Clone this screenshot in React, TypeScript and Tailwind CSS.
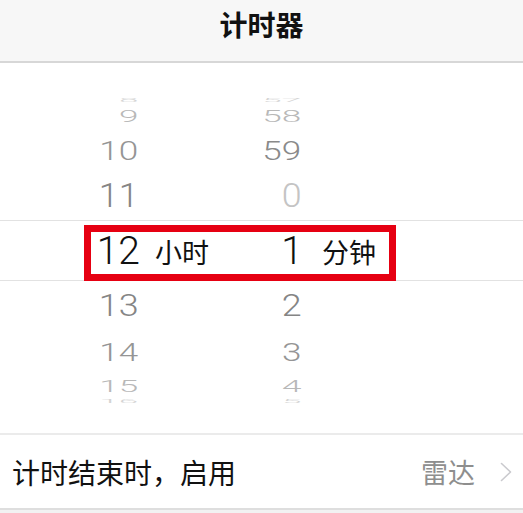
const cjk = { fontFamily: '"Noto Sans CJK SC", "Noto Sans", sans-serif' };
const num = { fontFamily: 'Roboto, "Liberation Sans", sans-serif' };

type Row = { h: string; m: string; box: string; scale: string; hc: string; mc: string };

const above: Row[] = [
  { h: "8", m: "57", box: "h-[17.5px]", scale: "scale-x-[0.9] scale-y-[0.15]", hc: "text-[#d4d4d4]", mc: "text-[#d4d4d4]" },
  { h: "9", m: "58", box: "h-[33.5px]", scale: "scale-x-[0.9] scale-y-[0.4]", hc: "text-[#b8b8b8]", mc: "text-[#b8b8b8]" },
  { h: "10", m: "59", box: "h-[45.5px]", scale: "scale-x-[0.9] scale-y-[0.65]", hc: "text-[#959595]", mc: "text-[#8a8a8a]" },
  { h: "11", m: "0", box: "h-[54.5px]", scale: "scale-x-[0.92] scale-y-[0.83]", hc: "text-[#858585]", mc: "text-[#c4c4c4]" },
];

const below: Row[] = [
  { h: "13", m: "2", box: "h-[46.5px]", scale: "scale-x-[0.92] scale-y-[0.8]", hc: "text-[#858585]", mc: "text-[#858585]" },
  { h: "14", m: "3", box: "h-[33.5px]", scale: "scale-x-[0.9] scale-y-[0.68]", hc: "text-[#959595]", mc: "text-[#959595]" },
  { h: "15", m: "4", box: "h-[15px]", scale: "scale-x-[0.9] scale-y-[0.43]", hc: "text-[#b8b8b8]", mc: "text-[#b8b8b8]" },
  { h: "16", m: "5", box: "h-0", scale: "scale-x-[0.9] scale-y-[0.15]", hc: "text-[#d4d4d4]", mc: "text-[#d4d4d4]" },
];

function WheelRow({ r }: { r: Row }) {
  return (
    <div className={r.box}>
      <div className="flex h-0 items-center text-[39px] font-light leading-none" style={num}>
        <div className="flex w-[140px] justify-end">
          <span className={`inline-block ${r.scale} ${r.hc}`}>{r.h}</span>
        </div>
        <div className="flex w-[163px] justify-end">
          <span className={`inline-block ${r.scale} ${r.mc}`}>{r.m}</span>
        </div>
      </div>
    </div>
  );
}

export default function App() {
  return (
    <div className="flex h-[513px] w-[523px] flex-col overflow-hidden bg-[#f2f2f2]">
      <div className="h-[63px] border-b-2 border-[#d7d7d7] bg-[#f7f7f7] pt-[10px] text-center">
        <h1 className="text-[28px] font-bold leading-[28px] text-[#111]" style={cjk}>计时器</h1>
      </div>

      <div className="relative h-[370px] bg-white pt-[37px]">
        <div className="absolute left-0 right-0 top-[157px] h-px bg-[#e2e2e2]" />
        <div className="absolute left-0 right-0 top-[217px] h-px bg-[#e2e2e2]" />

        {above.map((r) => <WheelRow key={r.h} r={r} />)}

        <div className="h-[55px]">
          <div className="flex h-0 items-center text-[#111]">
            <div className="flex w-[140px] justify-end text-[39px] font-light leading-none" style={num}>12</div>
            <div className="flex w-[163px] items-center">
              <span className="ml-[15px] text-[27px] leading-none" style={cjk}>小时</span>
              <span className="flex-1 text-right text-[39px] font-light leading-none" style={num}>1</span>
            </div>
            <span className="ml-[19px] text-[27px] leading-none" style={cjk}>分钟</span>
          </div>
        </div>

        {below.map((r) => <WheelRow key={r.h} r={r} />)}

        <div className="absolute left-[84px] top-[162px] h-[56px] w-[312px] border-[7px] border-[#e60012]" />
      </div>

      <div className="flex h-[77px] items-center border-y-2 border-t-[#ebebeb] border-b-[#dedede] bg-white pl-[12px] pr-[11px]">
        <span className="flex-1 text-[28px] leading-none text-[#111]" style={cjk}>计时结束时，启用</span>
        <span className="text-[27px] leading-none text-[#8e8e8e]" style={cjk}>雷达</span>
        <svg className="ml-[25px]" width="12" height="20" viewBox="0 0 12 20" fill="none">
          <polyline points="1.5,1.5 10.5,10 1.5,18.5" stroke="#cacace" strokeWidth="1.6" strokeLinecap="round" strokeLinejoin="round" />
        </svg>
      </div>
    </div>
  );
}
